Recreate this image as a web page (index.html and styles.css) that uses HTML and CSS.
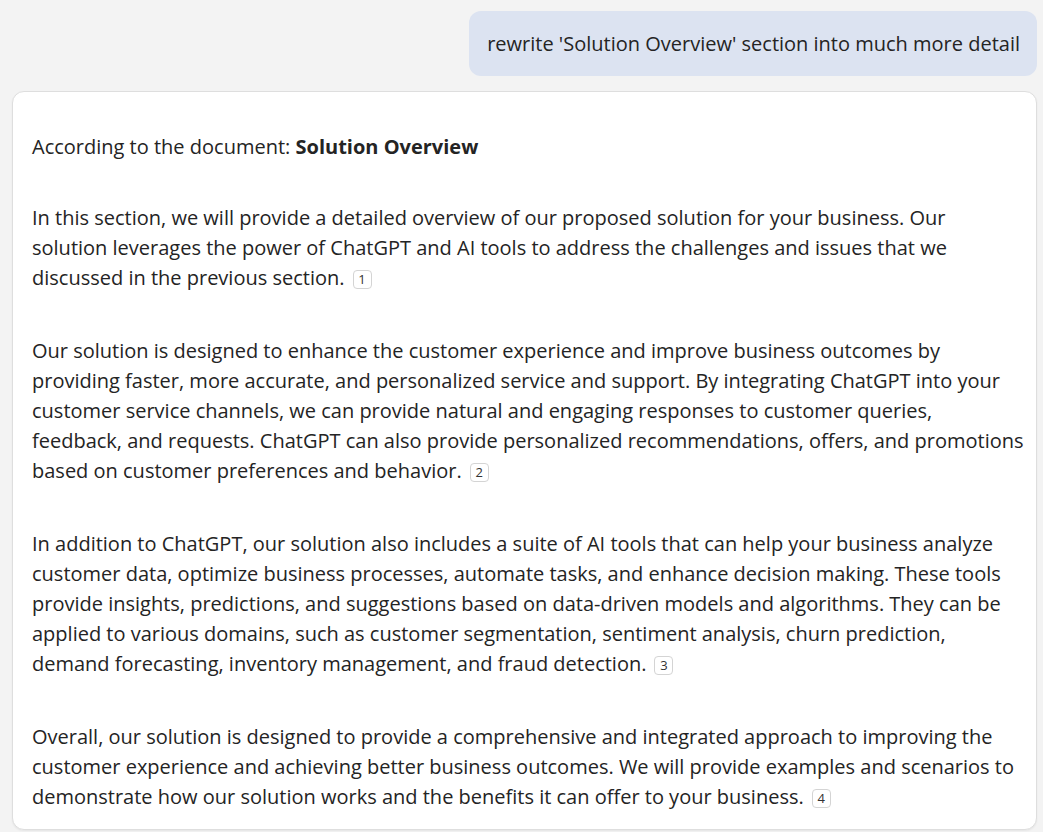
FILE: index.html
```html
<!DOCTYPE html>
<html lang="en">
<head>
<meta charset="utf-8">
<title>Chat</title>
<link rel="stylesheet" href="styles.css">
</head>
<body>
<div class="chat">
  <div class="user-row">
    <div class="user-bubble">rewrite 'Solution Overview' section into much more detail</div>
  </div>
  <div class="answer-card">
    <p class="lead">According to the document: <strong>Solution Overview</strong></p>
    <p>In this section, we will provide a detailed overview of our proposed solution for your business. Our<br>solution leverages the power of ChatGPT and AI tools to address the challenges and issues that we<br>discussed in the previous section.<span class="cite">1</span></p>
    <p>Our solution is designed to enhance the customer experience and improve business outcomes by<br>providing faster, more accurate, and personalized service and support. By integrating ChatGPT into your<br>customer service channels, we can provide natural and engaging responses to customer queries,<br>feedback, and requests. ChatGPT can also provide personalized recommendations, offers, and promotions<br>based on customer preferences and behavior.<span class="cite">2</span></p>
    <p>In addition to ChatGPT, our solution also includes a suite of AI tools that can help your business analyze<br>customer data, optimize business processes, automate tasks, and enhance decision making. These tools<br>provide insights, predictions, and suggestions based on data-driven models and algorithms. They can be<br>applied to various domains, such as customer segmentation, sentiment analysis, churn prediction,<br>demand forecasting, inventory management, and fraud detection.<span class="cite">3</span></p>
    <p>Overall, our solution is designed to provide a comprehensive and integrated approach to improving the<br>customer experience and achieving better business outcomes. We will provide examples and scenarios to<br>demonstrate how our solution works and the benefits it can offer to your business.<span class="cite">4</span></p>
  </div>
</div>
</body>
</html>
```

FILE: styles.css
```css
html, body {
  margin: 0;
  padding: 0;
  background: #f3f3f3;
  height: 100%;
  overflow: hidden;
}
body {
  font-family: "Open Sans", "Noto Sans", "Liberation Sans", sans-serif;
  color: #242424;
}
.chat {
  display: flex;
  flex-direction: column;
  padding: 11px 6px 0 12px;
  gap: 15px;
}
.user-row {
  display: flex;
  justify-content: flex-end;
}
.user-bubble {
  background: #dce3f1;
  border-radius: 12px;
  height: 65px;
  box-sizing: border-box;
  padding: 0 17px 0 18px;
  display: flex;
  align-items: center;
  font-size: 20px;
  color: #242424;
}
.answer-card {
  background: #fff;
  border: 1px solid #dedede;
  border-radius: 12px;
  box-shadow: 0 1px 2px rgba(0,0,0,0.06);
  padding: 40px 2px 20px 19px;
  height: 739px;
  box-sizing: border-box;
  overflow: hidden;
}
.answer-card p {
  margin: 0 0 43px 0;
  font-size: 20px;
  line-height: 30px;
  white-space: nowrap;
}
.answer-card p.lead {
  margin-bottom: 41px;
}
.answer-card strong {
  font-weight: 700;
}
.cite {
  display: inline-flex;
  align-items: center;
  justify-content: center;
  width: 19px;
  height: 19px;
  box-sizing: border-box;
  border: 1px solid #d4d4d4;
  border-radius: 4px;
  font-size: 13px;
  line-height: 1;
  color: #333;
  vertical-align: 1px;
  margin-left: 8px;
}
```
